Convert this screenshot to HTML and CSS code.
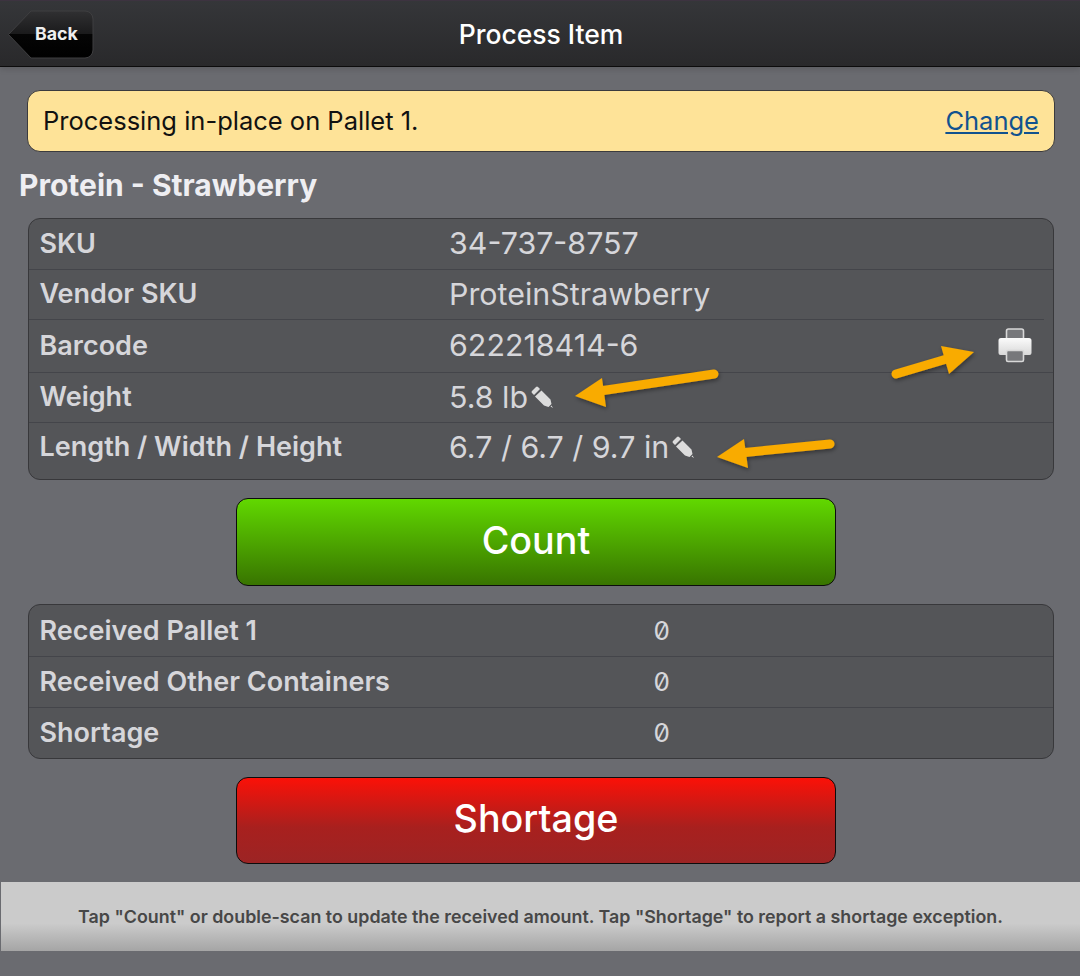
FILE: index.html
```html
<!DOCTYPE html>
<html lang="en">
<head>
    <meta charset="UTF-8">
    <title>Process Item</title>
    <link rel="stylesheet" href="styles.css">
</head>
<body>
    <header class="header">
        <a href="#" class="back-button">
            <svg class="back-shape" viewBox="0 0 86 49" width="86" height="49">
                <defs>
                    <linearGradient id="backFill" x1="0" y1="0" x2="0" y2="1">
                        <stop offset="0" stop-color="#303032"/>
                        <stop offset="0.5" stop-color="#1a1a1b"/>
                        <stop offset="0.5" stop-color="#050505"/>
                        <stop offset="1" stop-color="#000"/>
                    </linearGradient>
                </defs>
                <path d="M0.500 24.500L23 1h54a8 8 0 0 1 8 8v31a8 8 0 0 1-8 8H23z" fill="url(#backFill)" stroke="#3f3f41"/>
            </svg>
            <span class="back-label">Back</span>
        </a>
        <h1 class="header-title">Process Item</h1>
    </header>

    <main class="content">
        <div class="notice">
            <span>Processing in-place on Pallet 1.</span>
            <a href="#" class="notice-link">Change</a>
        </div>

        <h2 class="item-name">Protein - Strawberry</h2>

        <div class="panel">
            <div class="row row-sku">
                <span class="row-label">SKU</span>
                <span class="row-value">34-737-8757</span>
            </div>
            <div class="row row-vendor">
                <span class="row-label">Vendor SKU</span>
                <span class="row-value">ProteinStrawberry</span>
            </div>
            <div class="row row-barcode">
                <span class="row-label">Barcode</span>
                <span class="row-value">622218414-6</span>
                <svg class="print-icon" viewBox="0 0 36 36" width="36" height="36">
                    <defs>
                        <linearGradient id="printFill" x1="0" y1="0" x2="0" y2="1">
                            <stop offset="0" stop-color="#fbfbfb"/>
                            <stop offset="1" stop-color="#d8d8d8"/>
                        </linearGradient>
                    </defs>
                    <rect x="9.500" y="2" width="17" height="14" rx="2" fill="#77787b" stroke="#d8d8d8" stroke-width="1.600"/>
                    <path d="M4 11h28a2.500 2.500 0 0 1 2.500 2.500V26a2 2 0 0 1-2 2h-29a2 2 0 0 1-2-2V13.500A2.500 2.500 0 0 1 4 11z" fill="url(#printFill)"/>
                    <rect x="9.500" y="23.500" width="17" height="11" rx="1.500" fill="#77787b" stroke="#d8d8d8" stroke-width="1.600"/>
                </svg>
            </div>
            <div class="row row-weight">
                <span class="row-label">Weight</span>
                <span class="row-value">5.8 lb<svg class="edit-icon" viewBox="0 0 24 24" width="24" height="24"><path d="M2 6l4-4a1.400 1.400 0 0 1 2 0l2 2-6 6-2-2a1.400 1.400 0 0 1 0-2zM11.500 5.500l9 9 1 4.500-3 3-4.500-1.500-9-9zM21.500 20.500l1.500 2.500-2.500-1.500z" fill="#dcdcdc"/></svg></span>
            </div>
            <div class="row row-dims">
                <span class="row-label">Length / Width / Height</span>
                <span class="row-value">6.7 / 6.7 / 9.7 in<svg class="edit-icon" viewBox="0 0 24 24" width="24" height="24"><path d="M2 6l4-4a1.400 1.400 0 0 1 2 0l2 2-6 6-2-2a1.400 1.400 0 0 1 0-2zM11.500 5.500l9 9 1 4.500-3 3-4.500-1.500-9-9zM21.500 20.500l1.500 2.500-2.500-1.500z" fill="#dcdcdc"/></svg></span>
            </div>
        </div>

        <a href="#" class="action action-count">Count</a>

        <div class="panel">
            <div class="row row-count">
                <span class="row-label">Received Pallet 1</span>
                <span class="row-number">0</span>
            </div>
            <div class="row row-count">
                <span class="row-label">Received Other Containers</span>
                <span class="row-number">0</span>
            </div>
            <div class="row row-count">
                <span class="row-label">Shortage</span>
                <span class="row-number">0</span>
            </div>
        </div>

        <a href="#" class="action action-shortage">Shortage</a>
    </main>

    <footer class="hint">Tap "Count" or double-scan to update the received amount. Tap "Shortage" to report a shortage exception.</footer>

    <!-- annotation arrows drawn over the screenshot -->
    <svg class="arrows" viewBox="0 0 1080 976" width="1080" height="976">
        <defs>
            <filter id="arrowShadow" x="-20%" y="-50%" width="140%" height="200%">
                <feDropShadow dx="1" dy="2" stdDeviation="2" flood-color="#000" flood-opacity="0.4"/>
            </filter>
        </defs>
        <g fill="#f9ab06" stroke="#f9ab06" stroke-linecap="round" filter="url(#arrowShadow)">
            <path d="M896 374L950 358" stroke-width="9" fill="none"/>
            <path d="M941 346L974 352 949 374z" stroke="none"/>
            <path d="M714 374L600 391" stroke-width="9" fill="none"/>
            <path d="M602 378L575 396 606 407z" stroke="none"/>
            <path d="M830 444L740 453" stroke-width="9" fill="none"/>
            <path d="M744 439L717 457 748 468z" stroke="none"/>
        </g>
    </svg>
</body>
</html>
```

FILE: styles.css
```css
html, body {
    margin: 0;
    padding: 0;
}
body {
    position: relative;
    width: 1080px;
    height: 976px;
    overflow: hidden;
    background-color: #6a6b70;
    font-family: Inter, "Liberation Sans", sans-serif;
}

.header {
    position: relative;
    display: flex;
    align-items: center;
    justify-content: center;
    box-sizing: border-box;
    height: 67px;
    border-top: 1px solid #3d3340;
    border-bottom: 1px solid #0c0c0c;
    background: linear-gradient(#353639, #29292b);
    box-shadow: 0 2px 6px rgba(0, 0, 0, 0.15);
}
.header-title {
    margin: 0 0 0 2px;
    color: #fff;
    font-size: 26.500px;
    font-weight: 500;
}
.back-button {
    position: absolute;
    left: 8px;
    top: 9px;
    width: 86px;
    height: 49px;
    text-decoration: none;
}
.back-shape {
    display: block;
}
.back-label {
    position: absolute;
    left: 27px;
    top: 13px;
    color: #eee;
    font-size: 17.800px;
    font-weight: 700;
}

.content {
    display: flex;
    flex-direction: column;
    padding: 23px 25px 0 27px;
}
.notice {
    display: flex;
    align-items: center;
    justify-content: space-between;
    box-sizing: border-box;
    height: 62px;
    padding: 0 15px 2px;
    border: 1px solid #3b3b3e;
    border-radius: 13px;
    background-color: #fee398;
    color: #111;
    font-size: 25.500px;
}
.notice-link {
    color: #11528f;
}
.item-name {
    margin: 16px 0 16px -8px;
    color: #eeeef2;
    font-size: 30px;
    line-height: 34px;
    font-weight: 700;
}

.panel {
    box-sizing: border-box;
    width: 1026px;
    margin-left: 1px;
    border: 1px solid #38383b;
    border-radius: 12px;
    background-color: #545558;
    color: #d6d6da;
}
.row {
    position: relative;
    display: flex;
    align-items: center;
    box-sizing: border-box;
    height: 50px;
    padding: 0 0 2px 10.500px;
    border-bottom: 1px solid #44454a;
}
.row:last-child {
    border-bottom: none;
}
.row-label {
    width: 409.500px;
    font-size: 27px;
    font-weight: 600;
}
.row-value {
    display: flex;
    align-items: center;
    font-size: 30.400px;
}
.row-sku {
    height: 51px;
}
.row-vendor {
    margin-right: 9px;
}
.row-barcode {
    height: 53px;
}
.row-dims {
    height: 56px;
    padding-bottom: 9px;
}
.row-count {
    height: 51px;
    padding-bottom: 1px;
}
.row-count:first-child {
    height: 52px;
}
.row-count:last-child {
    height: 50px;
}
.row-count .row-label {
    width: 614px;
}
.row-number {
    font-variant-numeric: slashed-zero;
    font-size: 26px;
}
.print-icon {
    position: absolute;
    right: 20px;
    top: 7px;
}
.edit-icon {
    margin-left: 2px;
}

.action {
    display: block;
    box-sizing: border-box;
    align-self: flex-start;
    width: 600px;
    height: 88px;
    margin: 18px 0 18px 209px;
    border: 1px solid #0c0c0c;
    border-radius: 12px;
    color: #fff;
    font-size: 37.700px;
    font-weight: 500;
    line-height: 82px;
    text-align: center;
    text-decoration: none;
}
.action-count {
    background: linear-gradient(#61d800, #387400);
}
.action-shortage {
    height: 87px;
    line-height: 81px;
    background: linear-gradient(#fb1108 0%, #a8201e 58%, #9c2424 100%);
}

.hint {
    position: absolute;
    left: 1px;
    right: 0;
    top: 882px;
    box-sizing: border-box;
    height: 69px;
    padding-top: 24px;
    background: linear-gradient(#cbcbcb 0%, #cbcbcb 60%, #a5a5a5 100%);
    color: #474747;
    font-size: 17.850px;
    font-weight: 600;
    text-align: center;
}

.arrows {
    position: absolute;
    left: 0;
    top: 0;
    pointer-events: none;
}
```
